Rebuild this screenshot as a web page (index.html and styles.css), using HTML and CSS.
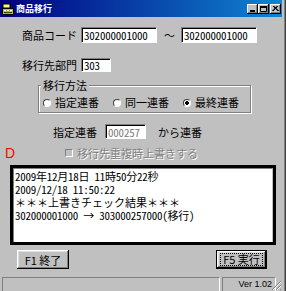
FILE: index.html
```html
<!DOCTYPE html>
<html lang="ja">
<head>
    <meta charset="UTF-8">
    <title>商品移行</title>
    <link rel="stylesheet" href="styles.css">
</head>
<body>
<div class="window">
    <div class="titlebar">
        <svg class="app-icon" width="12" height="12" viewBox="0 0 12 12">
            <rect x="1" y="1" width="7" height="4" fill="#ffff80" stroke="#000" stroke-width="1"/>
            <rect x="0.5" y="5.5" width="11" height="6" fill="#c0c000" stroke="#000" stroke-width="1"/>
            <rect x="2" y="7" width="2" height="1" fill="#fff"/>
            <rect x="5" y="7" width="2" height="1" fill="#fff"/>
            <rect x="8" y="7" width="2" height="1" fill="#fff"/>
            <rect x="2" y="9" width="8" height="1" fill="#404000"/>
        </svg>
        <span class="title">商品移行</span>
        <div class="title-buttons">
            <span class="tbtn"><svg width="11" height="10" viewBox="0 0 11 10"><rect x="3" y="6" width="5" height="2" fill="#000"/></svg></span>
            <span class="tbtn"><svg width="11" height="10" viewBox="0 0 11 10"><path d="M2.5 2.5h6v5h-6z" fill="none" stroke="#000"/><rect x="2" y="2" width="7" height="2" fill="#000"/></svg></span>
            <span class="tbtn tbtn-close"><svg width="11" height="10" viewBox="0 0 11 10"><path d="M3 2l5 5M8 2l-5 5M3.7 2l5 5M7.3 2l-5 5" stroke="#000" stroke-width="1"/></svg></span>
        </div>
    </div>

    <div class="client">
        <div class="row row-code">
            <span class="lbl">商品コード</span>
            <input class="field field-code" type="text" value="302000001000">
            <span class="tilde">～</span>
            <input class="field field-code" type="text" value="302000001000">
        </div>
        <div class="row row-dept">
            <span class="lbl">移行先部門</span>
            <input class="field field-dept" type="text" value="303">
        </div>

        <fieldset class="group">
            <legend>移行方法</legend>
            <div class="radios">
                <label class="radio"><input type="radio" name="method">指定連番</label>
                <label class="radio"><input type="radio" name="method">同一連番</label>
                <label class="radio"><input type="radio" name="method" checked>最終連番</label>
            </div>
        </fieldset>

        <div class="row row-serial">
            <span>指定連番</span>
            <input class="field field-serial" type="text" value="000257" disabled>
            <span class="from">から連番</span>
        </div>
        <div class="row row-check">
            <span class="mark">D</span>
            <label class="check"><input type="checkbox" disabled>移行先重複時上書きする</label>
        </div>

        <div class="memo-frame">
            <div class="memo">
                <div>2009年12月18日 11時50分22秒</div>
                <div>2009/12/18 11:50:22</div>
                <div class="full">＊＊＊上書きチェック結果＊＊＊</div>
                <div>302000001000 → 303000257000(移行)</div>
            </div>
        </div>

        <div class="buttons">
            <button class="btn">F1 終了</button>
            <button class="btn btn-default"><span class="focus">F5 実行</span></button>
        </div>

        <div class="statusbar">
            <div class="panel panel-main"></div>
            <div class="panel panel-ver">Ver 1.02</div>
            <svg class="grip" width="11" height="11" viewBox="0 0 11 11">
                <path d="M10 1L1 10M10 5L5 10M10 9L9 10" stroke="#808080" stroke-width="1"/>
                <path d="M10 2L2 10M10 6L6 10" stroke="#fff" stroke-width="1"/>
            </svg>
        </div>
    </div>
</div>
</body>
</html>
```

FILE: styles.css
```css
* {
    box-sizing: border-box;
}
body {
    margin: 0;
    background: #fff;
    font-family: "Noto Sans CJK JP", sans-serif;
    font-size: 11px;
    color: #000;
}
.window {
    width: 286px;
    height: 291px;
    background: #c0c0c0;
    padding-right: 4px;
    box-shadow: inset -1px 0 #404040, inset -2px 0 #808080;
    display: flex;
    flex-direction: column;
    overflow: hidden;
}
.titlebar {
    height: 17px;
    flex: none;
    display: flex;
    align-items: center;
    padding: 0 1px 0 2px;
    background: linear-gradient(to right, #000080, #1084d0);
}
.app-icon {
    display: block;
    margin-right: 2px;
}
.title {
    color: #fff;
    font-size: 9px;
    font-weight: bold;
    line-height: 12px;
}
.title-buttons {
    margin-left: auto;
    display: flex;
}
.tbtn {
    width: 11px;
    height: 10px;
    background: #c0c0c0;
    box-shadow: inset -1px -1px #000, inset 1px 1px #fff, inset -2px -2px #808080;
}
.tbtn svg {
    display: block;
}
.tbtn-close {
    margin-left: 1px;
}
.client {
    flex: 1;
    min-height: 0;
    display: flex;
    flex-direction: column;
}
.row {
    flex: none;
    display: flex;
    align-items: center;
    white-space: nowrap;
}
.lbl {
    width: 59px;
}
.field {
    height: 16px;
    padding: 0 0 0 2px;
    border: 1px solid;
    border-color: #808080 #fff #fff #808080;
    box-shadow: inset 1px 1px #000;
    background: #fff;
    font-family: "Noto Sans CJK JP", sans-serif;
    font-size: 11px;
    font-feature-settings: "hwid" 1;
    letter-spacing: -0.2px;
    color: #000;
    outline: none;
}
.row-code {
    margin-top: 10px;
    padding-left: 22px;
}
.field-code {
    width: 76px;
}
.tilde {
    width: 11px;
    margin: 0 6px 0 7px;
}
.row-dept {
    margin-top: 14px;
    padding-left: 22px;
}
.field-dept {
    width: 30px;
    height: 14px;
}
.group {
    flex: none;
    margin: 6px 0 0 38px;
    width: 213px;
    padding: 4px 0 3px 4px;
    border: 1px solid #808080;
    box-shadow: inset 1px 1px #fff, 1px 1px #fff;
    min-width: 0;
}
.group legend {
    padding: 0 2px;
    margin-left: -2px;
    background: #c0c0c0;
    line-height: 13px;
}
.radios {
    display: flex;
    gap: 14px;
    line-height: 13px;
    white-space: nowrap;
}
.radio {
    flex: none;
    display: flex;
    align-items: center;
    gap: 4px;
}
.radio input {
    appearance: none;
    width: 8px;
    height: 8px;
    margin: 0;
    border-radius: 50%;
    border: 1px solid;
    border-color: #404040 #fff #fff #404040;
    background: #fff;
}
.radio input:checked {
    background: radial-gradient(circle, #000 1.6px, #fff 2px);
}
.row-serial {
    margin-top: 11px;
    height: 15px;
    padding-left: 53px;
}
.field-serial {
    width: 41px;
    height: 15px;
    margin-left: 8px;
    color: #808080;
}
.from {
    margin-left: 12px;
}
.row-check {
    margin-top: 6px;
    height: 16px;
    padding-left: 5px;
}
.mark {
    width: 60px;
    font-family: "Liberation Sans", sans-serif;
    font-size: 14px;
    color: #f00;
    line-height: 16px;
}
.check {
    display: flex;
    align-items: center;
    gap: 4px;
    color: #808080;
    text-shadow: 1px 1px #fff;
}
.check input {
    appearance: none;
    width: 8px;
    height: 8px;
    margin: 0;
    border: 1px solid;
    border-color: #808080 #fff #fff #808080;
    background: #c0c0c0;
}
.memo-frame {
    flex: none;
    margin: 4px 0 0 10px;
    width: 266px;
    height: 80px;
    border: 3px solid #000;
}
.memo {
    height: 100%;
    background: #fff;
    border-top: 1px solid #808080;
    border-left: 1px solid #808080;
    border-right: 1px solid #c0c0c0;
    padding: 1px 0 0 1px;
    font-family: "Noto Sans CJK JP", sans-serif;
    font-feature-settings: "hwid" 1;
    font-size: 11px;
    letter-spacing: -0.25px;
    line-height: 13px;
    white-space: nowrap;
}
.memo .full {
    font-feature-settings: normal;
    letter-spacing: 0;
}
.buttons {
    flex: none;
    margin-top: 5px;
    display: flex;
    justify-content: space-between;
    padding: 0 15px 0 17px;
}
.btn {
    height: 19px;
    width: 52px;
    padding: 0;
    border: none;
    background: #c0c0c0;
    font-family: "Noto Sans CJK JP", sans-serif;
    font-size: 11px;
    color: #000;
    box-shadow: inset -1px -1px #000, inset 1px 1px #fff, inset -2px -2px #808080, inset 2px 2px #dfdfdf;
}
.btn-default {
    width: 51px;
    border: 1px solid #000;
    display: flex;
    align-items: center;
    justify-content: center;
}
.focus {
    border: 1px dotted #000;
    padding: 0 2px;
    line-height: 11px;
}
.statusbar {
    flex: none;
    margin-top: auto;
    height: 16px;
    display: flex;
    padding: 2px 0 0 2px;
    position: relative;
}
.panel {
    height: 14px;
    border: 1px solid;
    border-bottom: none;
    border-color: #808080 #fff #fff #808080;
}
.panel-main {
    flex: 1;
}
.panel-ver {
    width: 54px;
    margin-left: 2px;
    margin-right: 6px;
    text-align: right;
    padding-right: 3px;
    font-family: "Liberation Sans", sans-serif;
    font-size: 9px;
    line-height: 12px;
}
.grip {
    position: absolute;
    right: 0;
    bottom: 0;
}
```
